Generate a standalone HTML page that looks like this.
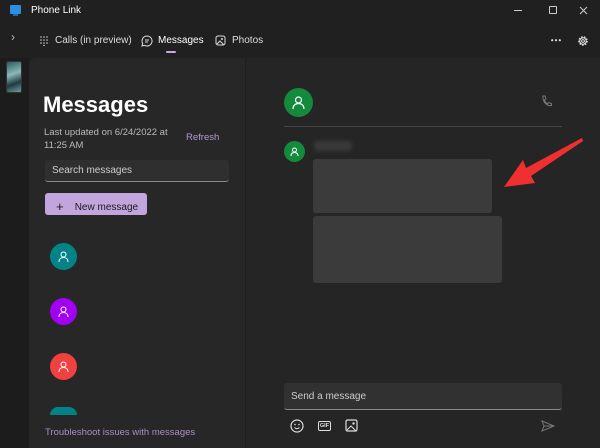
<!DOCTYPE html>
<html><head><style>
*{margin:0;padding:0;box-sizing:border-box}
body{width:600px;height:448px;background:#202020;font-family:"Liberation Sans",sans-serif;color:#fff;position:relative;overflow:hidden}
.a{position:absolute}
.av{position:absolute;border-radius:50%;display:flex;align-items:center;justify-content:center}
</style></head><body>
<div class="a" style="left:10px;top:5px;width:11px;height:9px;background:#2a8fe0;border-radius:1px"></div>
<div class="a" style="left:13px;top:14px;width:5px;height:2px;background:#1a6ab0"></div>
<div class="a" style="left:31px;top:5px;font-size:10px;color:#fff">Phone Link</div>
<div class="a" style="left:514px;top:10px;width:8px;height:1px;background:#ccc"></div>
<div class="a" style="left:549px;top:6px;width:8px;height:8px;border:1px solid #ccc;border-radius:1px"></div>
<svg class="a" style="left:579px;top:6px" width="9" height="9"><path d="M1 1l7 7M8 1l-7 7" stroke="#ccc"/></svg>
<div class="a" style="left:11px;top:30px;font-size:12px;color:#bbb">›</div>
<svg class="a" style="left:40px;top:36px" width="8" height="10"><g fill="#ccc"><circle cx="1" cy="1" r=".8"/><circle cx="4" cy="1" r=".8"/><circle cx="7" cy="1" r=".8"/><circle cx="1" cy="4" r=".8"/><circle cx="4" cy="4" r=".8"/><circle cx="7" cy="4" r=".8"/><circle cx="1" cy="7" r=".8"/><circle cx="4" cy="7" r=".8"/><circle cx="7" cy="7" r=".8"/><circle cx="4" cy="9.5" r=".8"/></g></svg>
<div class="a" style="left:55px;top:35px;font-size:10px;color:#ddd">Calls (in preview)</div>
<svg class="a" style="left:141px;top:35px" width="12" height="12"><path d="M6 1a5 5 0 1 1-2.5 9.3L1 11l.7-2.5A5 5 0 0 1 6 1z M4 5h4M4 7h3" stroke="#ddd" fill="none" stroke-width="1"/></svg>
<div class="a" style="left:158px;top:35px;font-size:10px;color:#fff">Messages</div>
<div class="a" style="left:166px;top:51px;width:10px;height:2px;background:#c7a8e0;border-radius:1px"></div>
<svg class="a" style="left:215px;top:35px" width="11" height="11"><rect x="1" y="1" width="9" height="9" rx="2" stroke="#ddd" fill="none"/><path d="M2 9l3-3 4 4" stroke="#ddd" fill="none"/><circle cx="7" cy="4" r="1" fill="#ddd"/></svg>
<div class="a" style="left:232px;top:35px;font-size:10px;color:#ddd">Photos</div>
<svg class="a" style="left:551px;top:39px" width="10" height="3"><g fill="#ddd"><circle cx="1.2" cy="1.2" r="1.1"/><circle cx="5" cy="1.2" r="1.1"/><circle cx="8.8" cy="1.2" r="1.1"/></g></svg>
<svg class="a" style="left:577px;top:35px" width="12" height="12"><circle cx="6" cy="6" r="4" stroke="#ddd" fill="none" stroke-width="1.6" stroke-dasharray="1.6 1.2"/><circle cx="6" cy="6" r="3.2" stroke="#ddd" fill="none"/><circle cx="6" cy="6" r="1.4" stroke="#ddd" fill="none"/></svg>
<div class="a" style="left:0;top:58px;width:29px;height:390px;background:#1c1c1c"></div>
<div class="a" style="left:6px;top:61px;width:16px;height:32px;border-radius:2px;background:linear-gradient(160deg,#2d5a5e,#8ab8b8 40%,#1f3a40 70%,#6aa0a0);border:1px solid #333"></div>
<div class="a" style="left:29px;top:58px;width:217px;height:390px;background:#272727;border-radius:7px 0 0 0"></div>
<div class="a" style="left:245px;top:58px;width:1px;height:390px;background:#1e1e1e"></div>
<div class="a" style="left:246px;top:58px;width:354px;height:390px;background:#252525"></div>
<div class="a" style="left:43px;top:92px;font-size:22px;font-weight:bold">Messages</div>
<div class="a" style="left:44px;top:126px;font-size:9.5px;color:#bbb;line-height:13px">Last updated on 6/24/2022 at<br>11:25 AM</div>
<div class="a" style="left:186px;top:132px;font-size:9.5px;color:#b29ad0">Refresh</div>
<div class="a" style="left:45px;top:160px;width:184px;height:22px;background:#2f2f2f;border-radius:3px;border-bottom:1px solid #8a8a8a;font-size:10px;color:#ccc;padding:5px 7px">Search messages</div>
<div class="a" style="left:45px;top:193px;width:102px;height:22px;background:#c3a5de;border-radius:3px;font-size:10px;color:#1a1a1a;padding:5px 0 0 11px"><span style="font-size:13px;position:relative;top:1px">+</span>&nbsp;&nbsp;&nbsp;&nbsp;New message</div>
<div class="av" style="left:50px;top:243px;width:27px;height:27px;background:#038387">
<svg width="11" height="11"><circle cx="5.5" cy="3.5" r="2.5" stroke="#fff" fill="none"/><path d="M1 11c0-3 2-4.5 4.5-4.5S10 8 10 11" stroke="#fff" fill="none"/></svg></div>
<div class="av" style="left:50px;top:298px;width:27px;height:27px;background:#a100f2"><svg width="11" height="11"><circle cx="5.5" cy="3.5" r="2.5" stroke="#fff" fill="none"/><path d="M1 11c0-3 2-4.5 4.5-4.5S10 8 10 11" stroke="#fff" fill="none"/></svg></div>
<div class="av" style="left:50px;top:353px;width:27px;height:27px;background:#f04040"><svg width="11" height="11"><circle cx="5.5" cy="3.5" r="2.5" stroke="#fff" fill="none"/><path d="M1 11c0-3 2-4.5 4.5-4.5S10 8 10 11" stroke="#fff" fill="none"/></svg></div>
<div class="a" style="left:50px;top:407px;width:27px;height:8px;background:#038387;border-radius:14px 14px 0 0"></div>
<div class="a" style="left:45px;top:427px;font-size:9.5px;color:#a890c8">Troubleshoot issues with messages</div>
<div class="av" style="left:284px;top:88px;width:29px;height:29px;background:#138a3c"><svg width="13" height="13"><circle cx="6.5" cy="4" r="3" stroke="#fff" fill="none" stroke-width="1.2"/><path d="M1 13c0-3.5 2.5-5.5 5.5-5.5S12 9.5 12 13" stroke="#fff" fill="none" stroke-width="1.2"/></svg></div>
<svg class="a" style="left:541px;top:95px" width="11" height="12"><path d="M2 1l2 0 1 3-1.5 1c.5 2 1.5 3 3 4l1-1.5 3 1v2c-5 1-9-4-8.5-9.5z" stroke="#777" fill="none"/></svg>
<div class="a" style="left:284px;top:126px;width:278px;height:1px;background:#444"></div>
<div class="av" style="left:284px;top:141px;width:21px;height:21px;background:#138a3c"><svg width="9" height="9"><circle cx="4.5" cy="3" r="2" stroke="#fff" fill="none"/><path d="M1 9c0-2.5 1.5-3.5 3.5-3.5S8 6.5 8 9" stroke="#fff" fill="none"/></svg></div>
<div class="a" style="left:314px;top:141px;width:38px;height:10px;background:#3a3a3a;border-radius:4px;filter:blur(2px)"></div>
<div class="a" style="left:313px;top:159px;width:179px;height:54px;background:#3b3b3b;border-radius:3px"></div>
<div class="a" style="left:313px;top:216px;width:189px;height:67px;background:#3b3b3b;border-radius:3px"></div>
<svg class="a" style="left:495px;top:135px" width="90" height="60"><polygon points="9,52 28,25 31,33 87,3 88,6 36,41 40,48" fill="#f03030"/></svg>
<div class="a" style="left:284px;top:383px;width:278px;height:27px;background:#313131;border-radius:3px;border-bottom:1px solid #8a8a8a;font-size:10px;color:#ccc;padding:8px 7px">Send a message</div>
<svg class="a" style="left:290px;top:419px" width="14" height="14"><circle cx="7" cy="7" r="6" stroke="#ddd" fill="none" stroke-width="1.2"/><circle cx="5" cy="5.5" r=".8" fill="#ddd"/><circle cx="9" cy="5.5" r=".8" fill="#ddd"/><path d="M4.5 8.5q2.5 2.5 5 0" stroke="#ddd" fill="none"/></svg>
<div class="a" style="left:318px;top:421px;width:13px;height:10px;border:1.2px solid #ddd;border-radius:2px;font-size:5.5px;font-weight:bold;color:#ddd;text-align:center;line-height:8px">GIF</div>
<svg class="a" style="left:345px;top:419px" width="13" height="13"><rect x="1" y="1" width="11" height="11" rx="1.5" stroke="#ddd" fill="none" stroke-width="1.2"/><path d="M2 11l4-4 5 5" stroke="#ddd" fill="none"/><circle cx="8.5" cy="4.5" r="1.2" fill="#ddd"/></svg>
<svg class="a" style="left:541px;top:420px" width="14" height="12"><path d="M1 1l12 5-12 5 2-5z M3 6h10" stroke="#777" fill="none"/></svg>
</body></html>
